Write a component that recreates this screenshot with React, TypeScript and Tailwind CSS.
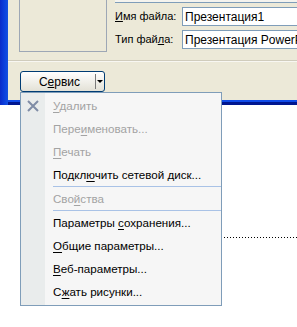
import React from "react";

type Item = {
  pre: string;
  key: string;
  post: string;
  disabled?: boolean;
  icon?: boolean;
  sepAfter?: boolean;
};

const items: Item[] = [
  { pre: "", key: "У", post: "далить", disabled: true, icon: true },
  { pre: "Пере", key: "и", post: "меновать...", disabled: true },
  { pre: "", key: "П", post: "ечать", disabled: true },
  { pre: "Подкл", key: "ю", post: "чить сетевой диск...", sepAfter: true },
  { pre: "Сво", key: "й", post: "ства", disabled: true, sepAfter: true },
  { pre: "Параметры ", key: "с", post: "охранения..." },
  { pre: "", key: "О", post: "бщие параметры..." },
  { pre: "", key: "В", post: "еб-параметры..." },
  { pre: "С", key: "ж", post: "ать рисунки..." },
];

const DeleteIcon = () => (
  <svg width="14" height="14" viewBox="0 0 14 14" className="block">
    <path d="M2 2 L12 12 M12 2 L2 12" stroke="#7F8CA6" strokeWidth="2" />
  </svg>
);

const MenuRow: React.FC<{ item: Item }> = ({ item }) => (
  <>
    <div className="flex h-[23px] items-center">
      <div className="flex h-full w-[24px] shrink-0 items-center justify-center bg-[#E9ECEC]">
        {item.icon && <DeleteIcon />}
      </div>
      <span
        className={`pl-[8px] text-[11.6px] whitespace-nowrap ${
          item.disabled ? "text-[#A3A3A3]" : "text-black"
        }`}
      >
        {item.pre}
        <span className="underline underline-offset-2">{item.key}</span>
        {item.post}
      </span>
    </div>
    {item.sepAfter && (
      <div className="flex h-px">
        <div className="w-[24px] shrink-0 bg-[#E9ECEC]" />
        <div className="ml-[8px] flex-1 bg-[#A9C2E6]" />
      </div>
    )}
  </>
);

export default function App() {
  return (
    <div className="relative h-[327px] w-[297px] overflow-hidden bg-white font-['Liberation_Sans',Arial,sans-serif]">
      {/* dialog window (bottom-left part) */}
      <div className="flex h-[105px]">
        <div className="w-[8px] shrink-0 bg-gradient-to-r from-[#0A2AC8] via-[#0B3DDC] to-[#1450E0]" />
        <div className="flex flex-1 flex-col">
          <div className="flex flex-1 flex-col bg-[#ECE9D8]">
            <div className="flex h-[52px]">
              <div className="ml-[11px] w-[88px] border-x border-b border-[#9DA7B5]" />
              <div className="ml-[8px] flex flex-1 flex-col">
                <div className="h-[3px] border-b border-[#7F9DB9] bg-[#F4F3EE]" />
                <div className="mt-[4px] flex h-[19px] items-center">
                  <span className="w-[67px] shrink-0 text-[11px] text-black">
                    <span className="underline underline-offset-1">И</span>мя файла:
                  </span>
                  <div className="flex h-full flex-1 items-center border border-r-0 border-[#7F9DB9] bg-white pl-[2px] text-[12px] whitespace-nowrap text-black">
                    Презентация1
                  </div>
                </div>
                <div className="mt-[4px] flex h-[19px] items-center">
                  <span className="w-[67px] shrink-0 text-[11px] text-black">
                    Тип фай<span className="underline underline-offset-1">л</span>а:
                  </span>
                  <div className="flex h-full min-w-0 flex-1 items-center overflow-hidden border border-r-0 border-[#7F9DB9] bg-white pl-[2px] text-[12px] whitespace-nowrap text-black">
                    Презентация PowerPoint
                  </div>
                </div>
              </div>
            </div>
            <div className="mt-[8px] h-px bg-[#D0CCBC]" />
            <div className="h-px bg-[#F8F7F2]" />
            <div className="mt-[9px] ml-[12px] flex h-[21px] w-[85px] rounded-[3px] border border-[#003C74] bg-gradient-to-b from-[#FFFFFF] to-[#E3E1D6]">
              <div className="flex flex-1 items-center justify-center pl-[3px] text-[12px] text-black">
                С<span className="underline underline-offset-1">е</span>рвис
              </div>
              <div className="my-[2px] w-px bg-[#7A7A7A]" />
              <div className="flex w-[8px] items-center justify-center">
                <div className="h-0 w-0 border-x-[3px] border-t-[3px] border-x-transparent border-t-black" />
              </div>
            </div>
          </div>
          <div className="h-[2px] bg-[#0F4BE8]" />
          <div className="h-[3px] bg-[#00168F]" />
        </div>
      </div>

      {/* slide content behind */}
      <div className="mt-[132px] ml-[221px] h-px bg-[repeating-linear-gradient(90deg,#000_0_1px,transparent_1px_3px)]" />

      {/* popup menu */}
      <div className="absolute top-[92px] left-[20px] flex h-[214px] w-[202px] flex-col border border-[#7F9DB9] bg-[#F6F6F6]">
        <div className="flex h-px">
          <div className="w-[24px] bg-[#E9ECEC]" />
        </div>
        {items.map((it, i) => (
          <MenuRow key={i} item={it} />
        ))}
        <div className="flex flex-1">
          <div className="w-[24px] bg-[#E9ECEC]" />
        </div>
      </div>
    </div>
  );
}
